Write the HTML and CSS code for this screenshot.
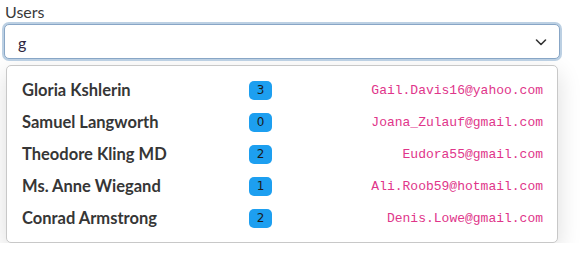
FILE: index.html
```html
<!DOCTYPE html>
<html lang="en">
<head>
    <meta charset="UTF-8">
    <meta name="viewport" content="width=device-width, initial-scale=1.0">
    <title>Users</title>
    <link rel="stylesheet" href="styles.css">
</head>
<body>
    <div class="field">
        <label for="users">Users</label>
        <div class="select">
            <input type="text" id="users" value="g">
            <svg class="chevron" width="14" height="14" viewBox="0 0 14 14">
                <path d="M2.5 5l4.5 4.5 4.5-4.5" fill="none" stroke="#333" stroke-width="1.6" stroke-linecap="round" stroke-linejoin="round"/>
            </svg>
        </div>
        <ul class="dropdown">
            <li class="option"><span class="name">Gloria Kshlerin</span><span class="badge">3</span><span class="email">Gail.Davis16@yahoo.com</span></li>
            <li class="option"><span class="name">Samuel Langworth</span><span class="badge">0</span><span class="email">Joana_Zulauf@gmail.com</span></li>
            <li class="option"><span class="name">Theodore Kling MD</span><span class="badge">2</span><span class="email">Eudora55@gmail.com</span></li>
            <li class="option"><span class="name">Ms. Anne Wiegand</span><span class="badge">1</span><span class="email">Ali.Roob59@hotmail.com</span></li>
            <li class="option"><span class="name">Conrad Armstrong</span><span class="badge">2</span><span class="email">Denis.Lowe@gmail.com</span></li>
        </ul>
    </div>
</body>
</html>
```

FILE: styles.css
```css
body {
    font-family: Lato, "Noto Sans", sans-serif;
    margin: 0;
    padding: 0;
    background-color: #fff;
    color: #333;
}

.field {
    width: 556px;
    margin: 2px 0 0 4px;
}

label {
    display: block;
    font-size: 16px;
    line-height: 20px;
    color: #3a3a3a;
    margin-left: 1px;
}

.select {
    position: relative;
}

.select input {
    display: block;
    box-sizing: border-box;
    width: 100%;
    height: 35px;
    padding: 1px 13px 0;
    font-family: Lato, "Noto Sans", sans-serif;
    font-size: 16px;
    color: #2e2440;
    border: 1px solid #88a6c6;
    border-radius: 5px;
    box-shadow: 0 0 0 2px #bcd0e3;
    outline: none;
    margin-top: 2px;
}

.chevron {
    position: absolute;
    right: 12px;
    top: 11px;
}

.dropdown {
    list-style: none;
    margin: 6px 2px 0 2px;
    padding: 8px 14px 8px 15px;
    background-color: #fff;
    border: 1px solid #c8c8c8;
    border-radius: 5px;
    box-shadow: 0 8px 24px rgba(0, 0, 0, 0.14);
}

.option {
    display: grid;
    grid-template-columns: 227px auto 1fr;
    align-items: center;
    height: 32px;
}

.name {
    font-size: 16.5px;
    font-weight: 700;
    color: #363636;
}

.badge {
    display: inline-block;
    width: 23px;
    height: 19px;
    line-height: 19px;
    text-align: center;
    font-size: 12px;
    font-family: "DejaVu Sans", sans-serif;
    color: #1a1a1a;
    background-color: #1d9ff0;
    border-radius: 5px;
}

.email {
    text-align: right;
    font-family: "Liberation Mono", monospace;
    font-size: 13px;
    color: #e0358a;
}
```
